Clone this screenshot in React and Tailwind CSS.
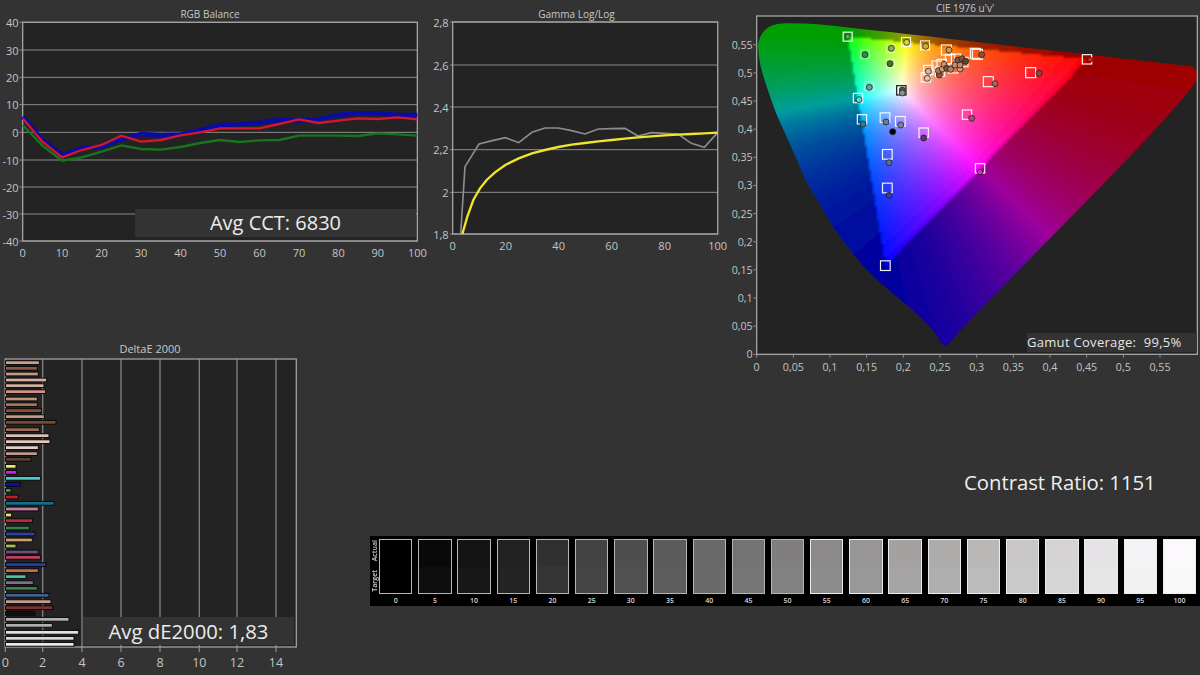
import React, { useMemo } from 'react'

const AXIS = '#c4c4c4'
const GRID = '#8c8c8c'
const FRAME = '#a2a2a2'
const PLOT = '#232323'

const toPts = pts => pts.map(p => p.join(',')).join(' ')

// ---- RGB balance, coords are 3x screen px
const rgbX = i => 68 + i * 59.2
const seq = ys => ys.map((y, i) => [rgbX(i), y])
const RGB_BLUE = seq([350, 420, 465, 445, 440, 418, 402, 405, 403, 390, 375, 373, 368, 360, 362, 358, 345, 340, 340, 345, 345])
const RGB_RED = seq([355, 425, 472, 450, 435, 407, 425, 420, 406, 397, 385, 385, 385, 372, 358, 369, 362, 355, 357, 352, 358])
const RGB_GREEN = seq([375, 437, 482, 472, 455, 436, 447, 449, 441, 429, 420, 426, 421, 420, 407, 407, 407, 408, 400, 403, 407])
const RGB_Y = [[40, 67], [30, 150], [20, 232], [10, 314], [0, 397], [-10, 480], [-20, 561], [-30, 642], [-40, 723]]

function RgbChart() {
  return (
    <div className="relative w-[430px] shrink-0">
      <div className="h-[22px] w-[420px] text-center text-[10px] leading-[28px] text-[#c8c8c8]">RGB Balance</div>
      <svg viewBox="0 66 1290 744" className="h-[248px] w-[430px] overflow-visible">
        <rect x="68" y="67" width="1184" height="656" fill={PLOT} />
        {RGB_Y.map(([v, y]) => (
          <g key={v}>
            <line x1="58" x2="1252" y1={y} y2={y} stroke={GRID} strokeWidth="3" />
            <text x="56" y={y} textAnchor="end" dominantBaseline="central" fontSize="33" fill={AXIS}>{v}</text>
          </g>
        ))}
        <rect x="68" y="67" width="1184" height="656" fill="none" stroke={FRAME} strokeWidth="4" />
        {[0, 10, 20, 30, 40, 50, 60, 70, 80, 90, 100].map((v, i) => (
          <text key={v} x={68 + i * 118.4} y="757" textAnchor="middle" dominantBaseline="central" fontSize="33" fill={AXIS}>{v}</text>
        ))}
        <polyline points={toPts(RGB_GREEN)} fill="none" stroke="#17761c" strokeWidth="7" />
        <polyline points={toPts(RGB_BLUE)} fill="none" stroke="#0a0aa6" strokeWidth="13" />
        <polyline points={toPts(RGB_RED)} fill="none" stroke="#d2172f" strokeWidth="7" />
      </svg>
      <div className="absolute left-[135px] top-[209px] flex h-[28px] w-[281px] items-center justify-center bg-[#333333] text-[20px] text-[#ececec]">
        Avg CCT: 6830
      </div>
    </div>
  )
}

// ---- Gamma
const GAMMA_GREY = [[92, 702], [105, 500], [147, 432], [187, 422], [226, 413], [266, 428], [306, 397], [345, 384], [385, 384], [425, 392], [465, 402], [505, 387], [545, 386], [585, 385], [624, 408], [664, 398], [704, 400], [744, 402], [784, 430], [823, 442], [863, 398]]
const GAMMA_YELLOW = [[97, 702], [112, 650], [130, 600], [150, 565], [170, 540], [195, 517], [226, 495], [266, 475], [306, 460], [345, 450], [385, 441], [425, 434], [465, 429], [505, 424], [545, 420], [585, 416], [624, 412], [664, 409], [704, 406], [744, 404], [784, 402], [823, 400], [863, 398]]
const GAMMA_Y = [['2,8', 66], ['2,6', 195], ['2,4', 321], ['2,2', 449], ['2', 577], ['1,8', 702]]

function GammaChart() {
  return (
    <div className="w-[300px] shrink-0">
      <div className="h-[22px] w-[293px] text-center text-[10px] leading-[28px] text-[#c8c8c8]">Gamma Log/Log</div>
      <svg viewBox="0 66 900 744" className="h-[248px] w-[300px] overflow-visible">
        <rect x="68" y="66" width="795" height="636" fill={PLOT} />
        {GAMMA_Y.map(([v, y]) => (
          <g key={v}>
            <line x1="60" x2="863" y1={y} y2={y} stroke={GRID} strokeWidth="3" />
            <text x="56" y={y} textAnchor="end" dominantBaseline="central" fontSize="33" fill={AXIS}>{v}</text>
          </g>
        ))}
        <rect x="68" y="66" width="795" height="636" fill="none" stroke={FRAME} strokeWidth="4" />
        {[0, 20, 40, 60, 80, 100].map((v, i) => (
          <text key={v} x={68 + i * 159} y="735" textAnchor="middle" dominantBaseline="central" fontSize="33" fill={AXIS}>{v}</text>
        ))}
        <polyline points={toPts(GAMMA_GREY)} fill="none" stroke="#8d8d8d" strokeWidth="5" />
        <polyline points={toPts(GAMMA_YELLOW)} fill="none" stroke="#efe62e" strokeWidth="7" />
      </svg>
    </div>
  )
}

// ---- CIE 1976 u'v'
// outline traced from the plot, in the same 3x coords as the markers
const LOCUS_PTS = [
  [612, 1038], [605, 1032], [580, 990], [530, 940], [470, 890], [410, 840], [362, 790], [322, 740], [285, 690], [255, 640], [225, 590], [195, 540],
  [178, 495], [155, 445], [133, 395], [110, 345], [92, 295], [75, 245], [60, 195], [54, 145], [55, 125], [65, 100], [85, 80], [115, 70], [160, 69], [230, 72],
  [298, 80], [387, 89], [496, 101], [627, 116], [779, 134], [938, 152], [1082, 168], [1195, 181], [1333, 197], [1372, 200], [1372, 265], [660, 990], [630, 1030],
]
const locusPath = () => {
  const mid = (a, b) => [(a[0] + b[0]) / 2, (a[1] + b[1]) / 2]
  const n = LOCUS_PTS.length
  const start = mid(LOCUS_PTS[n - 1], LOCUS_PTS[0])
  let d = `M${start[0]} ${start[1]}`
  LOCUS_PTS.forEach((p, i) => {
    const m = mid(p, LOCUS_PTS[(i + 1) % n])
    d += ` Q${p[0]} ${p[1]} ${m[0]} ${m[1]}`
  })
  return d + 'Z'
}
const cx = u => 50 + u * 2200
const cy = v => 1063 - v * 1689

const uvToXyz = (u, v) => [(9 * u) / (4 * v), 1, (12 - 3 * u - 20 * v) / (4 * v)]

function invert(m) {
  const [[a, b, c], [d, e, f], [g, h, i]] = m
  const A = e * i - f * h, B = f * g - d * i, C = d * h - e * g
  const det = a * A + b * B + c * C
  return [
    [A / det, (c * h - b * i) / det, (b * f - c * e) / det],
    [B / det, (a * i - c * g) / det, (c * d - a * f) / det],
    [C / det, (b * g - a * h) / det, (a * e - b * d) / det],
  ]
}

const mul = (m, p) => m.map(r => r[0] * p[0] + r[1] * p[1] + r[2] * p[2])

function gamutMatrix() {
  const R = uvToXyz(.4505, .524), G = uvToXyz(.124, .564), B = uvToXyz(.1755, .1575)
  const base = [[R[0], G[0], B[0]], [R[1], G[1], B[1]], [R[2], G[2], B[2]]]
  const s = mul(invert(base), uvToXyz(.1978, .4683))
  return invert(base.map(r => [r[0] * s[0], r[1] * s[1], r[2] * s[2]]))
}

function insidePoly(x, y, poly) {
  let hit = false
  for (let i = 0, j = poly.length - 1; i < poly.length; j = i++) {
    const [xi, yi] = poly[i], [xj, yj] = poly[j]
    if ((yi > y) !== (yj > y) && x < ((xj - xi) * (y - yi)) / (yj - yi) + xi) hit = !hit
  }
  return hit
}

function gamutCells() {
  const M = gamutMatrix()
  const cells = []
  const step = 6
  for (let y = 36; y < 1060; y += step) {
    for (let x = 44; x < 1390; x += step) {
      const near = [[0, 0], [15, 0], [-15, 0], [0, 15], [0, -15]].some(([dx, dy]) => insidePoly(x + dx, y + dy, LOCUS_PTS))
      if (!near) continue
      const u = (x + 3 - 50) / 2200, v = (1063 - y - 3) / 1689
      const lin = mul(M, uvToXyz(u, v))
      const out = lin.some(c => c < 0)
      const pos = lin.map(c => Math.max(c, 0))
      const top = Math.max(...pos, 1e-6)
      const k = out ? 0.62 : 1
      const exp = out ? 1.15 : 0.8
      const [r, g, b] = pos.map(c => Math.round(255 * k * Math.pow(c / top, exp)))
      cells.push(<rect key={`${x}-${y}`} x={x} y={y} width={step + 1} height={step + 1} fill={`rgb(${r},${g},${b})`} />)
    }
  }
  return cells
}

// target squares: x, y, size, stroke, opacity
const SQUARES = [
  [323, 110, 27], [375, 162, 25, '#fff', .35], [452, 145, 25, '#fff', .35], [452, 190, 25, '#fff', .35],
  [498, 126, 27, '#fff', .85], [555, 136, 27, '#fff', .85], [619, 150, 30], [706, 160, 30], [712, 163, 30],
  [1041, 178, 28], [872, 218, 30], [745, 245, 30], [388, 258, 27, '#fff', .4], [354, 294, 28], [484, 271, 28, '#0a0a0a'],
  [366, 358, 28], [435, 353, 29, '#fff', .9], [481, 364, 29, '#fff', .9], [681, 344, 28], [551, 398, 28], [442, 463, 29],
  [720, 505, 28], [442, 564, 29], [436, 797, 29],
  [565, 210, 28], [558, 232, 28], [590, 197, 28], [605, 192, 28], [630, 178, 28], [648, 176, 28], [670, 186, 28], [600, 215, 28], [640, 205, 28],
]
// actual circles: x, y, fill
const CIRCLES = [
  [323, 110, '#3ecb3a', 7], [375, 164, '#2e8b4b'], [454, 145, '#8cae5a'], [450, 191, '#4a6d30'], [500, 127, '#d8d430'], [557, 139, '#d0b040'],
  [627, 150, '#d09a50'], [725, 164, '#8a5035'], [1050, 179, '#e02020', 7], [897, 220, '#8a4545'], [765, 251, '#b06060'], [388, 262, '#60a0a0'],
  [357, 299, '#40e0e0'], [487, 270, '#555555'], [487, 279, '#909090'], [369, 372, '#2e7e8e'], [438, 366, '#6a7a9a'], [482, 375, '#7e80a8'],
  [695, 355, '#a05080'], [458, 395, '#000000'], [551, 414, '#603070'], [447, 488, '#606a8a'], [720, 516, '#e030c0', 8], [447, 586, '#3040a0'],
  [565, 214, '#e8b090'], [562, 235, '#f0c0a0'], [598, 225, '#8a5a40'], [595, 212, '#a87a58'], [607, 207, '#d09a70'], [612, 193, '#c89070'],
  [620, 205, '#7a5030'], [632, 208, '#b08060'], [645, 195, '#c09070'], [660, 207, '#d09a80'], [660, 195, '#c08a70'], [653, 180, '#8a5038'],
  [666, 176, '#8a5038'], [677, 184, '#6a4028'],
]
const CIE_Y = [['0,55', .55], ['0,5', .5], ['0,45', .45], ['0,4', .4], ['0,35', .35], ['0,3', .3], ['0,25', .25], ['0,2', .2], ['0,15', .15], ['0,1', .1], ['0,05', .05], ['0', 0]]
const CIE_X = [['0', 0], ['0,05', .05], ['0,1', .1], ['0,15', .15], ['0,2', .2], ['0,25', .25], ['0,3', .3], ['0,35', .35], ['0,4', .4], ['0,45', .45], ['0,5', .5], ['0,55', .55]]

function CieChart() {
  const cells = useMemo(gamutCells, [])
  return (
    <div className="relative ml-[10px] w-[460px] shrink-0">
      <div className="h-[16px] w-[450px] text-center text-[10px] leading-[17px] text-[#c8c8c8]">CIE 1976 u'v'</div>
      <svg viewBox="0 48 1380 1092" className="h-[364px] w-[460px] overflow-visible">
        <defs>
          <clipPath id="locus"><path d={locusPath()} /></clipPath>
          <filter id="soft" x="0" y="0" width="100%" height="100%"><feGaussianBlur stdDeviation="3" /></filter>
        </defs>
        <rect x="50" y="48" width="1322" height="1015" fill={PLOT} />
        <g clipPath="url(#locus)">
          <g filter="url(#soft)" shapeRendering="crispEdges">{cells}</g>
        </g>
        <rect x="50" y="48" width="1322" height="1015" fill="none" stroke={FRAME} strokeWidth="4" />
        {CIE_Y.map(([t, v]) => (
          <g key={t}>
            <line x1="40" x2="50" y1={cy(v)} y2={cy(v)} stroke={GRID} strokeWidth="3" />
            <text x="38" y={cy(v)} textAnchor="end" dominantBaseline="central" fontSize="32" fill={AXIS}>{t}</text>
          </g>
        ))}
        {CIE_X.map(([t, u]) => (
          <g key={t}>
            <line x1={cx(u)} x2={cx(u)} y1="1063" y2="1073" stroke={GRID} strokeWidth="3" />
            <text x={cx(u)} y="1100" textAnchor="middle" dominantBaseline="central" fontSize="32" fill={AXIS}>{t}</text>
          </g>
        ))}
        {SQUARES.map(([x, y, s, stroke = '#fff', op = .95], i) => (
          <rect key={i} x={x - s / 2} y={y - s / 2} width={s} height={s} fill="none" stroke={stroke} strokeOpacity={op} strokeWidth="3.5" />
        ))}
        {CIRCLES.map(([x, y, fill, r = 9], i) => (
          <circle key={i} cx={x} cy={y} r={r} fill={fill} stroke="#1c1c1c" strokeOpacity=".75" strokeWidth="3" />
        ))}
      </svg>
      <div className="absolute left-[287px] top-[333px] flex h-[19px] w-[170px] items-center whitespace-pre bg-[#333333] text-[13px] tracking-[0.3px] text-[#e6e6e6]">
        {'Gamut Coverage:  99,5%'}
      </div>
    </div>
  )
}

// ---- DeltaE bars: centre y, end x, colour (screen px)
const DE_TOP = [[68, 118, '#c8a090'], [85, 112, '#8a5a48'], [102, 115, '#c09a88'], [120, 140, '#d8b0a0'], [137, 132, '#d0b0a0'], [155, 137, '#d09088'], [177, 112, '#c09078'], [194, 112, '#a07860'], [212, 125, '#8a5038'], [230, 133, '#c09a88'], [247, 168, '#7a4a30'], [269, 118, '#9a6a58'], [287, 147, '#e0c0b0'], [305, 150, '#e8c8b8'], [323, 115, '#e0d0c8'], [341, 112, '#c09a90'], [358, 93, '#5a4030'], [379, 48, '#e8e870'], [397, 50, '#d020d0'], [415, 122, '#50c8c8'], [433, 62, '#1010a0'], [451, 33, '#40a040'], [471, 55, '#c02020'], [490, 162, '#107090']]
const DE_BOTTOM = [[12, 115, '#c080a0'], [30, 35, '#e8e070'], [47, 98, '#b03040'], [69, 88, '#308050'], [87, 105, '#3040a0'], [105, 97, '#d0a070'], [123, 48, '#a0c050'], [141, 115, '#6a5080'], [157, 122, '#c04060'], [179, 138, '#2040a0'], [197, 115, '#c07050'], [215, 78, '#50c0a0'], [233, 100, '#7a7090'], [250, 112, '#408040'], [271, 147, '#406090'], [290, 153, '#c0a090'], [308, 158, '#803030'], [325, 105, '#101010'], [343, 207, '#b0b0b0'], [361, 157, '#b0b0b0'], [382, 236, '#e0e0e0'], [400, 222, '#d8d8d8'], [418, 222, '#e8e8e8']]
const DE_BARS = [
  ...DE_TOP.map(([y, x, c]) => [340 + y / 3, x / 3, c]),
  ...DE_BOTTOM.map(([y, x, c]) => [505 + y / 3, x / 3, c]),
]
const DE_X = [[0, 5.3], [2, 42.7], [4, 82], [6, 121], [8, 160], [10, 199.3], [12, 237], [14, 276]]

function DeltaChart() {
  return (
    <div className="relative w-[300px] shrink-0">
      <div className="h-[19px] text-center text-[11px] leading-[18px] text-[#c8c8c8]">DeltaE 2000</div>
      <svg viewBox="0 359 300 316" className="h-[316px] w-[300px] overflow-visible">
        <rect x="5.3" y="359" width="291" height="288" fill={PLOT} />
        {DE_X.map(([v, x]) => (
          <g key={v}>
            <line x1={x} x2={x} y1="359" y2="652" stroke={GRID} strokeWidth="1.2" />
            <text x={x} y="662" textAnchor="middle" dominantBaseline="central" fontSize="12.5" fill={AXIS}>{v}</text>
          </g>
        ))}
        <rect x="5.3" y="359" width="291" height="288" fill="none" stroke={FRAME} strokeWidth="1.3" />
        {DE_BARS.map(([y, x, c], i) => (
          <rect key={i} x="5.5" y={y - 1.9} width={x - 5.5} height="3.8" fill={c} stroke="#0a0a0a" strokeWidth="1" />
        ))}
      </svg>
      <div className="absolute left-[83px] top-[277px] flex h-[28px] w-[211px] items-center justify-center bg-[#333333] text-[20.3px] text-[#ececec]">
        Avg dE2000: 1,83
      </div>
    </div>
  )
}

// ---- Grayscale strip
const GREYS = [
  ['0', 'bg-[#000000]', 'bg-[#000000]'], ['5', 'bg-[#090909]', 'bg-[#0e0e0e]'], ['10', 'bg-[#141414]', 'bg-[#171717]'],
  ['15', 'bg-[#222222]', 'bg-[#242424]'], ['20', 'bg-[#303030]', 'bg-[#353535]'], ['25', 'bg-[#434343]', 'bg-[#444444]'],
  ['30', 'bg-[#4e4e4e]', 'bg-[#505050]'], ['35', 'bg-[#5c5c5c]', 'bg-[#5d5d5d]'], ['40', 'bg-[#696969]', 'bg-[#6a6a6a]'],
  ['45', 'bg-[#747373]', 'bg-[#767676]'], ['50', 'bg-[#807e7e]', 'bg-[#818181]'], ['55', 'bg-[#8b8989]', 'bg-[#8c8c8c]'],
  ['60', 'bg-[#979595]', 'bg-[#989898]'], ['65', 'bg-[#a5a1a1]', 'bg-[#a4a4a4]'], ['70', 'bg-[#aeabab]', 'bg-[#afafaf]'],
  ['75', 'bg-[#bab7b7]', 'bg-[#bbbbbb]'], ['80', 'bg-[#c8c6c6]', 'bg-[#c9c9c9]'], ['85', 'bg-[#d6d3d4]', 'bg-[#d6d6d6]'],
  ['90', 'bg-[#e5e3e5]', 'bg-[#e5e5e5]'], ['95', 'bg-[#f4f3f5]', 'bg-[#f2f2f2]'], ['100', 'bg-[#fbf9fb]', 'bg-[#f8f8f8]'],
]

function GreyStrip() {
  return (
    <div className="flex h-[70px] w-[830px] bg-black pt-[3px]">
      <div className="flex h-[54px] w-[9px] flex-col items-center justify-between py-[1px] text-[7px] leading-[9px] font-semibold text-[#d0d0d0]">
        <span className="rotate-180 [writing-mode:vertical-rl]">Actual</span>
        <span className="rotate-180 [writing-mode:vertical-rl]">Target</span>
      </div>
      <div className="flex gap-[5.8px]">
        {GREYS.map(([label, top, bottom], i) => (
          <div key={label} className="w-[33.4px]">
            <div className={`flex h-[55px] flex-col border ${i > 10 ? 'border-[#ececec]' : 'border-[#b5b5b5]'}`}>
              <div className={`flex-1 ${top}`} />
              <div className={`flex-1 ${bottom}`} />
            </div>
            <div className="mt-[1px] text-center text-[7px] leading-[11px] font-semibold text-[#d8d8d8]">{label}</div>
          </div>
        ))}
      </div>
    </div>
  )
}

export default function App() {
  return (
    <div className="flex h-[675px] w-[1200px] flex-col overflow-hidden bg-[#333333] font-['Open_Sans',sans-serif]">
      <div className="flex h-[340px] items-start">
        <RgbChart />
        <GammaChart />
        <CieChart />
      </div>
      <div className="flex h-[335px]">
        <DeltaChart />
        <div className="ml-[70px] flex w-[830px] flex-col">
          <div className="mt-[128px] h-[28px] pl-[594px] text-[20.3px] leading-[28px] text-[#efefef]">Contrast Ratio: 1151</div>
          <div className="mt-[40px]"><GreyStrip /></div>
        </div>
      </div>
    </div>
  )
}
